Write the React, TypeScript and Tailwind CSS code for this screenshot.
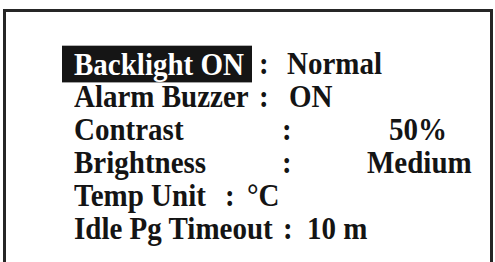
import React from 'react'

interface Row {
  label: string
  value: string
  labelWidth: number
  colonWidth: number
  selected?: boolean
}

const rows: Row[] = [
  { label: 'Backlight ON', value: 'Normal', labelWidth: 185, colonWidth: 28, selected: true },
  { label: 'Alarm Buzzer', value: 'ON', labelWidth: 185, colonWidth: 30 },
  { label: 'Contrast', value: '50%', labelWidth: 208, colonWidth: 107 },
  { label: 'Brightness', value: 'Medium', labelWidth: 208, colonWidth: 85 },
  { label: 'Temp Unit', value: '°C', labelWidth: 151, colonWidth: 22 },
  { label: 'Idle Pg Timeout', value: '10 m', labelWidth: 209, colonWidth: 24 },
]

export default function App() {
  return (
    <div className="w-[495px] h-[262px] overflow-hidden bg-white pt-[9px] pl-[3px]">
      <div
        className="w-[490px] h-[270px] border-[3px] border-b-0 border-[#262626] pt-[35px] pl-[68px] text-[#141414] font-bold text-[29px] leading-[33px]"
        style={{ fontFamily: '"Liberation Serif", "Times New Roman", serif' }}
      >
        {rows.map((row) => (
          <div key={row.label} className="flex items-center h-[33px] whitespace-pre scale-y-[1.08]">
            {row.selected ? (
              <span className="-ml-[12px] w-[197px] shrink-0">
                <span className="inline-block w-[190px] h-[34px] leading-[34px] pl-[12px] bg-[#151515] text-white">
                  {row.label}
                </span>
              </span>
            ) : (
              <span className="shrink-0" style={{ width: row.labelWidth }}>
                {row.label}
              </span>
            )}
            <span className="shrink-0" style={{ width: row.colonWidth }}>
              :
            </span>
            <span>{row.value}</span>
          </div>
        ))}
      </div>
    </div>
  )
}
